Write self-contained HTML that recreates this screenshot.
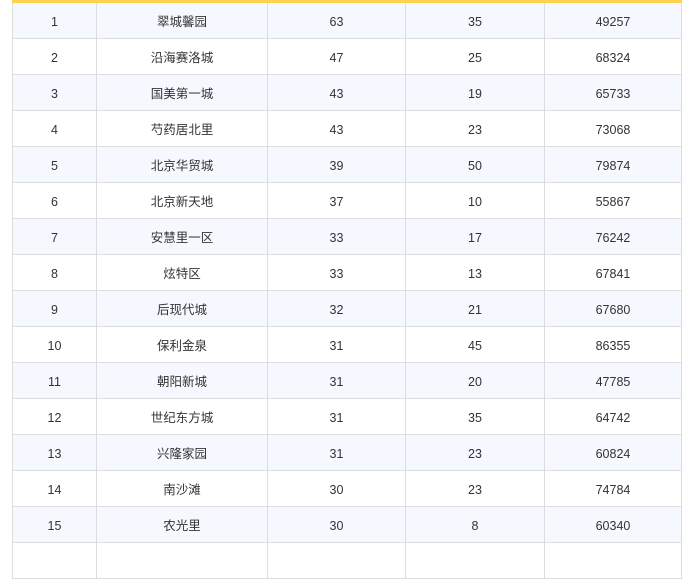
<!DOCTYPE html>
<html><head><meta charset="utf-8"><style>
html,body{margin:0;padding:0;background:#fff;width:683px;height:545px;overflow:hidden}
body{font-family:"Liberation Sans","Noto Sans CJK SC",sans-serif;font-size:12.5px;color:#333}
.t{position:absolute;left:12px;top:0;width:670px;border-top:3px solid #fcd34f;}
.r{display:flex;height:35px;border-bottom:1px solid #dddddd;}
.r:nth-child(odd){background:#f5f9ff}
.c{border-left:1px solid #dddddd;text-align:center;box-sizing:border-box;line-height:39px;height:35px;overflow:hidden}
.c:last-child{border-right:1px solid #dddddd}
.a{width:84px}.b{width:171px}.d{width:138px}.e{width:139px}.f{width:138px}
</style></head><body>
<div class="t">
<div class="r"><div class="c a">1</div><div class="c b">翠城馨园</div><div class="c d">63</div><div class="c e">35</div><div class="c f">49257</div></div>
<div class="r"><div class="c a">2</div><div class="c b">沿海赛洛城</div><div class="c d">47</div><div class="c e">25</div><div class="c f">68324</div></div>
<div class="r"><div class="c a">3</div><div class="c b">国美第一城</div><div class="c d">43</div><div class="c e">19</div><div class="c f">65733</div></div>
<div class="r"><div class="c a">4</div><div class="c b">芍药居北里</div><div class="c d">43</div><div class="c e">23</div><div class="c f">73068</div></div>
<div class="r"><div class="c a">5</div><div class="c b">北京华贸城</div><div class="c d">39</div><div class="c e">50</div><div class="c f">79874</div></div>
<div class="r"><div class="c a">6</div><div class="c b">北京新天地</div><div class="c d">37</div><div class="c e">10</div><div class="c f">55867</div></div>
<div class="r"><div class="c a">7</div><div class="c b">安慧里一区</div><div class="c d">33</div><div class="c e">17</div><div class="c f">76242</div></div>
<div class="r"><div class="c a">8</div><div class="c b">炫特区</div><div class="c d">33</div><div class="c e">13</div><div class="c f">67841</div></div>
<div class="r"><div class="c a">9</div><div class="c b">后现代城</div><div class="c d">32</div><div class="c e">21</div><div class="c f">67680</div></div>
<div class="r"><div class="c a">10</div><div class="c b">保利金泉</div><div class="c d">31</div><div class="c e">45</div><div class="c f">86355</div></div>
<div class="r"><div class="c a">11</div><div class="c b">朝阳新城</div><div class="c d">31</div><div class="c e">20</div><div class="c f">47785</div></div>
<div class="r"><div class="c a">12</div><div class="c b">世纪东方城</div><div class="c d">31</div><div class="c e">35</div><div class="c f">64742</div></div>
<div class="r"><div class="c a">13</div><div class="c b">兴隆家园</div><div class="c d">31</div><div class="c e">23</div><div class="c f">60824</div></div>
<div class="r"><div class="c a">14</div><div class="c b">南沙滩</div><div class="c d">30</div><div class="c e">23</div><div class="c f">74784</div></div>
<div class="r"><div class="c a">15</div><div class="c b">农光里</div><div class="c d">30</div><div class="c e">8</div><div class="c f">60340</div></div>
<div class="r"><div class="c a"></div><div class="c b"></div><div class="c d"></div><div class="c e"></div><div class="c f"></div></div>
</div>
</body></html>
